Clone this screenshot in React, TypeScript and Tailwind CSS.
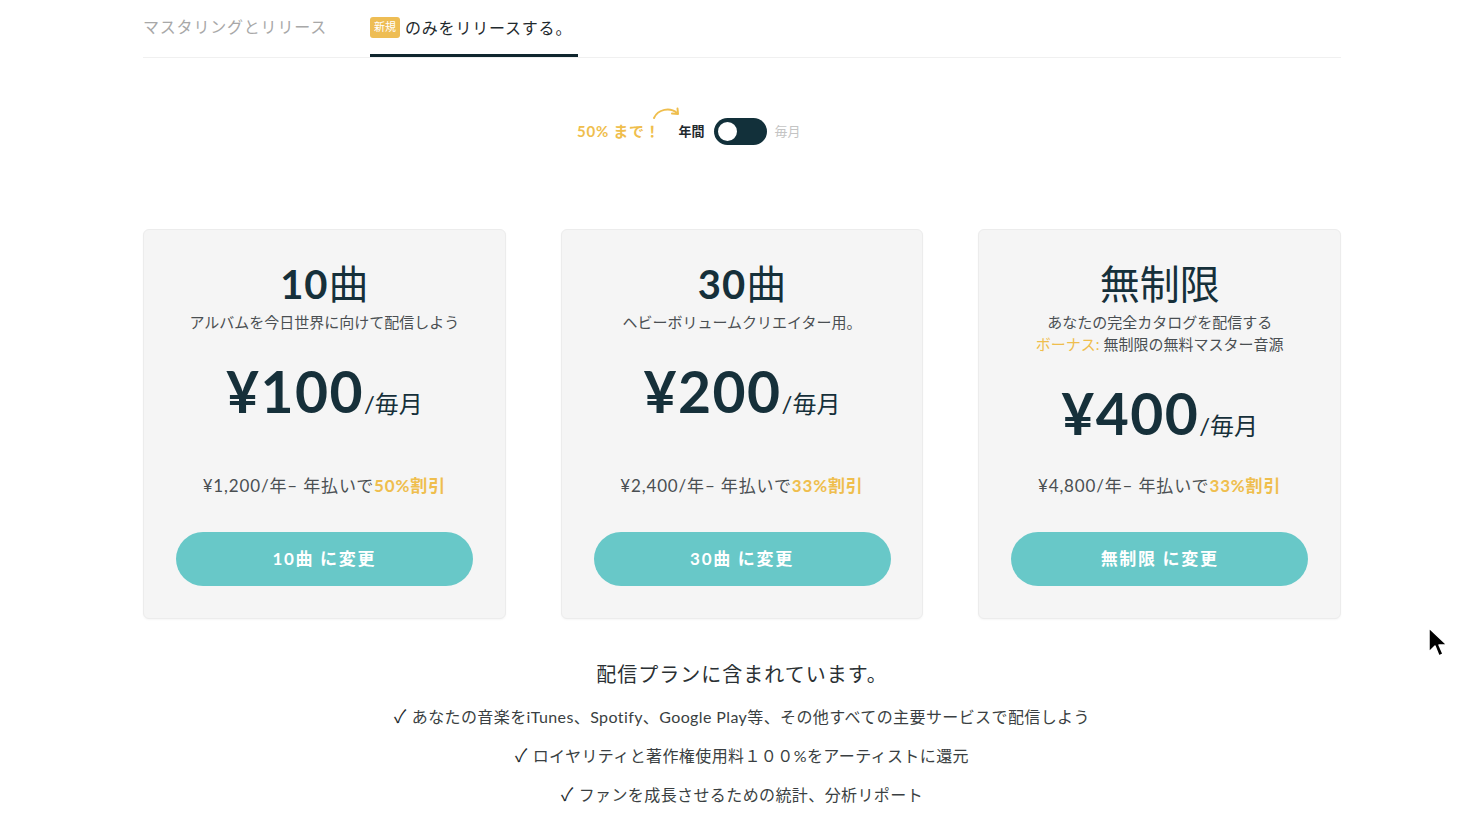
type Plan = {
  num: string;
  unit: string;
  lines: { bonus?: string; text: string }[];
  price: string;
  yearly: string;
  discount: string;
  button: string;
};

const plans: Plan[] = [
  {
    num: "10",
    unit: "曲",
    lines: [{ text: "アルバムを今日世界に向けて配信しよう" }],
    price: "¥100",
    yearly: "¥1,200/年– 年払いで",
    discount: "50%割引",
    button: "10曲 に変更",
  },
  {
    num: "30",
    unit: "曲",
    lines: [{ text: "ヘビーボリュームクリエイター用。" }],
    price: "¥200",
    yearly: "¥2,400/年– 年払いで",
    discount: "33%割引",
    button: "30曲 に変更",
  },
  {
    num: "",
    unit: "無制限",
    lines: [
      { text: "あなたの完全カタログを配信する" },
      { bonus: "ボーナス: ", text: "無制限の無料マスター音源" },
    ],
    price: "¥400",
    yearly: "¥4,800/年– 年払いで",
    discount: "33%割引",
    button: "無制限 に変更",
  },
];

const features = [
  "あなたの音楽をiTunes、Spotify、Google Play等、その他すべての主要サービスで配信しよう",
  "ロイヤリティと著作権使用料１００%をアーティストに還元",
  "ファンを成長させるための統計、分析リポート",
];

const font = "font-['Lato','Noto_Sans_CJK_JP',sans-serif]";

const PlanCard = ({ plan }: { plan: Plan }) => {
  return (
    <div className="flex h-[390px] flex-col items-center rounded-md border border-[#ececec] bg-[#f5f5f5] px-8 pt-[29px] shadow-[0_1px_2px_rgba(0,0,0,0.04)]">
      <h2 className="text-[40px] leading-[50px] text-[#16303a]">
        {plan.num && <span className="font-bold tracking-wide">{plan.num}</span>}
        <span>{plan.unit}</span>
      </h2>
      <div className="mt-[2px] flex flex-col items-center text-[15px] leading-[22px] text-[#4a4f52]">
        {plan.lines.map((l) => (
          <p key={l.text}>
            {l.bonus && <span className="text-[#efbe4d]">{l.bonus}</span>}
            {l.text}
          </p>
        ))}
      </div>
      <div className="mt-[28px] flex items-baseline text-[#16303a]">
        <span className="text-[57px] font-bold leading-[60px] tracking-wide">{plan.price}</span>
        <span className="text-[24px]">/毎月</span>
      </div>
      <p className="mt-auto text-[17px] tracking-wider text-[#4a4f52]">
        {plan.yearly}
        <span className="font-bold text-[#efbe4d]">{plan.discount}</span>
      </p>
      <button className="mb-[32px] mt-[34px] h-[54px] w-[297px] shrink-0 rounded-full bg-[#68c8c8] text-[17px] font-bold tracking-widest text-white">
        {plan.button}
      </button>
    </div>
  );
};

const App = () => {
  return (
    <div className={`relative min-h-[824px] bg-white ${font}`}>
      <div className="ml-[143px] w-[1198px]">
        {/* tabs */}
        <div className="flex h-[58px] items-end border-b border-[#f0f0f0]">
          <div className="flex h-full items-center pb-[4px] text-[16px] tracking-wider text-[#a8a8a8]">
            マスタリングとリリース
          </div>
          <div className="ml-[43px] flex h-full items-center border-b-[3px] border-[#10262e] pr-[6px] pt-[1px]">
            <span className="mr-[5px] rounded-[3px] bg-[#eebd54] px-[4px] py-[2px] text-[11px] text-white">新規</span>
            <span className="text-[16px] tracking-wider text-[#1f2a2e]">のみをリリースする。</span>
          </div>
        </div>

        {/* billing toggle */}
        <div className="ml-[434px] mt-[60px] flex items-center">
          <span className="relative text-[15px] font-bold tracking-wider text-[#efbe4d]">
            50% まで！
            <svg className="absolute -right-[21px] -top-[14px]" width="30" height="16" viewBox="0 0 30 16" fill="none">
              <path d="M2 12 C6 3, 18 1, 25 7" stroke="#efbe4d" strokeWidth="2" strokeLinecap="round" />
              <path d="M20 7.5 L26 8 L25.5 2.5" stroke="#efbe4d" strokeWidth="2" strokeLinecap="round" strokeLinejoin="round" />
            </svg>
          </span>
          <span className="ml-[18px] text-[13px] font-bold text-[#1f2a2e]">年間</span>
          <div className="ml-[9px] flex h-[27px] w-[53px] items-center rounded-full bg-[#12303a] px-[2px]">
            <div className="h-[23px] w-[23px] rounded-full border-[2px] border-[#12303a] bg-white" />
          </div>
          <span className="ml-[8px] text-[13px] text-[#c4c4c4]">毎月</span>
        </div>

        {/* plans */}
        <div className="mt-[84px] grid grid-cols-3 gap-[55px]">
          {plans.map((p) => (
            <PlanCard key={p.button} plan={p} />
          ))}
        </div>

        {/* features */}
        <div className="mt-[40px] flex flex-col items-center text-[#2a3033]">
          <h3 className="text-[20px] tracking-wider">配信プランに含まれています。</h3>
          <ul className="mt-[15px] flex flex-col items-center gap-[14px] text-[16px] text-[#3a3f42]">
            {features.map((f) => (
              <li key={f} className="leading-[24px] tracking-wide">
                <span className="mr-[5px] text-[18px] text-[#1f2a2e]">✓</span>
                {f}
              </li>
            ))}
          </ul>
        </div>
      </div>

      {/* mouse pointer */}
      <svg className="absolute left-[1427px] top-[626px]" width="22" height="34" viewBox="0 0 22 34">
        <path d="M2 2 L2 26 L8 20 L12 30 L16 28 L12 19 L20 19 Z" fill="#000" stroke="#fff" strokeWidth="1.5" strokeLinejoin="round" />
      </svg>
    </div>
  );
};

export default App;
